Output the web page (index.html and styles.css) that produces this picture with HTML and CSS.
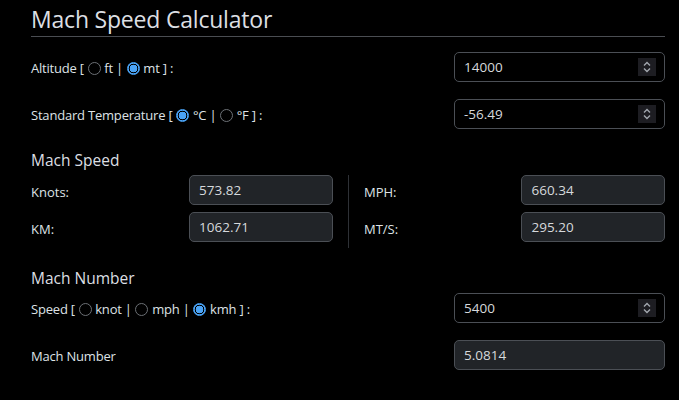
FILE: index.html
```html
<!DOCTYPE html>
<html lang="en">
<head>
<meta charset="utf-8">
<title>Mach Speed Calculator</title>
<link rel="stylesheet" href="styles.css">
</head>
<body>
<main class="page">
  <h1 class="title">Mach Speed Calculator</h1>

  <div class="row first">
    <div class="label">Altitude [ <span class="radio"></span> ft | <span class="radio on"></span> mt ] :</div>
    <div class="field spin"><span class="val">14000</span><span class="spinner"><svg width="18" height="18" viewBox="0 0 18 18"><path d="M6 7.5 9 4.5 12 7.5M6 10.5 9 13.5 12 10.5" fill="none" stroke="#a2a7ae" stroke-width="1.4"/></svg></span></div>
  </div>

  <div class="row second">
    <div class="label">Standard Temperature [ <span class="radio on"></span> °C | <span class="radio"></span> °F ] :</div>
    <div class="field spin"><span class="val">-56.49</span><span class="spinner"><svg width="18" height="18" viewBox="0 0 18 18"><path d="M6 7.5 9 4.5 12 7.5M6 10.5 9 13.5 12 10.5" fill="none" stroke="#a2a7ae" stroke-width="1.4"/></svg></span></div>
  </div>

  <h2 class="section">Mach Speed</h2>
  <div class="speeds">
    <div class="col left">
      <div class="pair"><span class="plabel">Knots:</span><span class="ro">573.82</span></div>
      <div class="pair"><span class="plabel">KM:</span><span class="ro">1062.71</span></div>
    </div>
    <div class="col right">
      <div class="pair"><span class="plabel">MPH:</span><span class="ro">660.34</span></div>
      <div class="pair"><span class="plabel">MT/S:</span><span class="ro">295.20</span></div>
    </div>
  </div>

  <h2 class="section s2">Mach Number</h2>
  <div class="row third">
    <div class="label">Speed [ <span class="radio"></span> knot | <span class="radio"></span> mph | <span class="radio on"></span> kmh ] :</div>
    <div class="field spin"><span class="val">5400</span><span class="spinner"><svg width="18" height="18" viewBox="0 0 18 18"><path d="M6 7.5 9 4.5 12 7.5M6 10.5 9 13.5 12 10.5" fill="none" stroke="#a2a7ae" stroke-width="1.4"/></svg></span></div>
  </div>
  <div class="row fourth">
    <div class="label">Mach Number</div>
    <div class="field readonly"><span class="val">5.0814</span></div>
  </div>
</main>
</body>
</html>
```

FILE: styles.css
```css
* { box-sizing: border-box; }
html, body { margin: 0; padding: 0; background: #000; }
body {
  font-family: "Open Sans", "Noto Sans", sans-serif;
  color: #dee2e6;
  font-size: 13px;
}
.page {
  width: 679px;
  padding: 0 14px 0 31px;
}
.title {
  margin: 0;
  padding-top: 3px;
  font-size: 23px;
  font-weight: 400;
  line-height: 32px;
  height: 37px;
  border-bottom: 1px solid #4a4d52;
  letter-spacing: -0.2px;
  color: #dcdfe3;
}
.row {
  display: flex;
  align-items: center;
  height: 30px;
}
.row.first { margin-top: 15px; }
.row.second { margin-top: 17px; }
.row.fourth { margin-top: 17px; }
.label {
  flex: 1;
  white-space: pre;
  padding-top: 2px;
  letter-spacing: -0.2px;
  line-height: 18px;
}
.radio {
  display: inline-block;
  vertical-align: -2px;
  width: 13px;
  height: 13px;
  border-radius: 50%;
  border: 1px solid #6c7075;
  margin: 0 0.5px;
}
.radio.on {
  border-color: #4aa3f5;
  background: radial-gradient(circle, #4aa3f5 0 3.6px, #000 4.1px 4.6px, #4aa3f5 5.1px);
}
.field {
  width: 211px;
  height: 30px;
  border: 1px solid #4b4f55;
  border-radius: 5px;
  display: flex;
  align-items: center;
  padding: 0 8px 0 9px;
  font-size: 13.5px;
  color: #d6d9dc;
}
.field .val { flex: 1; }
.field.readonly { background: #212428; }
.spinner {
  width: 18px;
  height: 18px;
  background: #1d1d22;
  display: block;
}
.spinner svg { display: block; }
.section {
  margin: 0;
  font-size: 15.5px;
  font-weight: 400;
  line-height: 20px;
  color: #dcdfe3;
}
.section { margin-top: 21px; }
.section.s2 { margin-top: 20px; }
.speeds {
  display: flex;
  margin-top: 5px;
}
.col {
  width: 317px;
  display: flex;
  flex-direction: column;
  gap: 7px;
}
.col.left { padding-right: 15px; }
.col.right {
  border-left: 1px solid #2e3136;
  padding-left: 15px;
  height: 73px;
}
.pair {
  display: flex;
  align-items: center;
  height: 30px;
}
.plabel {
  width: 158px;
  padding-top: 4px;
}
.ro {
  width: 144px;
  height: 30px;
  background: #212428;
  border: 1px solid #4b4f55;
  border-radius: 5px;
  display: flex;
  align-items: center;
  padding-left: 9px;
  font-size: 13.5px;
  color: #d6d9dc;
}
.row.third { margin-top: 5px; height: 30px; }
.row.third .label { padding-top: 1px; }
```
